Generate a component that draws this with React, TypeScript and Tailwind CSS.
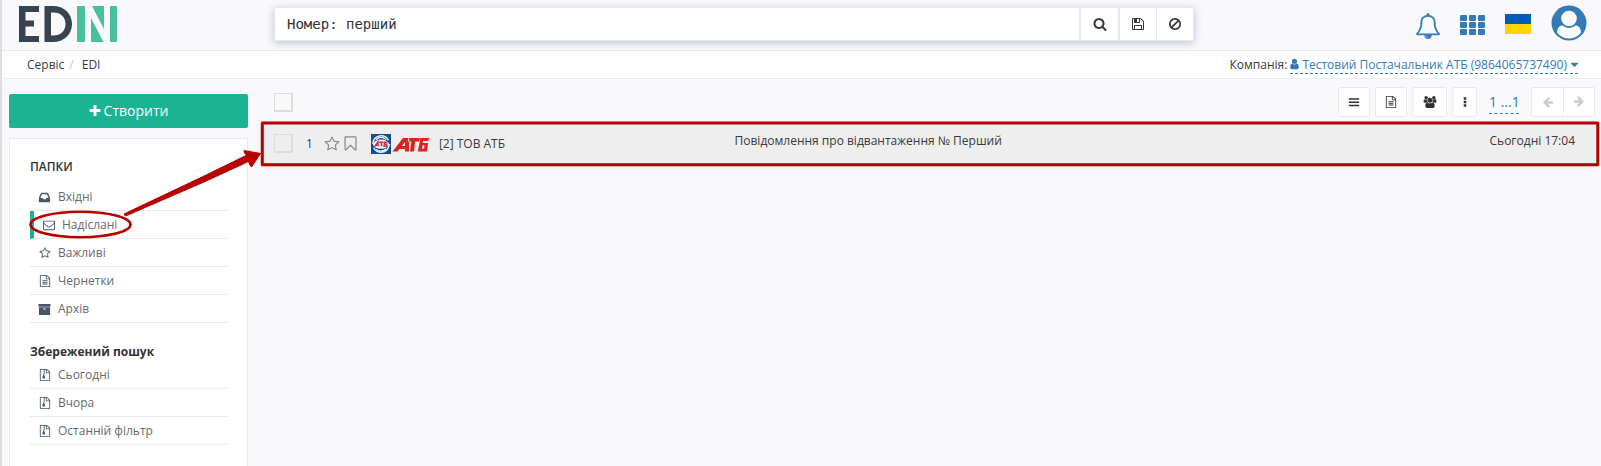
import React from "react";

const paths = {
  plus: "M1600 736v192q0 40-28 68t-68 28h-416v416q0 40-28 68t-68 28h-192q-40 0-68-28t-28-68v-416h-416q-40 0-68-28t-28-68v-192q0-40 28-68t68-28h416v-416q0-40 28-68t68-28h192q40 0 68 28t28 68v416h416q40 0 68 28t28 68z",
  search: "M1216 832q0-185-131.5-316.5t-316.5-131.5-316.5 131.5-131.5 316.5 131.5 316.5 316.5 131.5 316.5-131.5 131.5-316.5zm512 832q0 52-38 90t-90 38q-54 0-90-38l-343-342q-179 124-399 124-143 0-273.5-55.5t-225-150-150-225-55.5-273.5 55.5-273.5 150-225 225-150 273.5-55.5 273.5 55.5 225 150 150 225 55.5 273.5q0 220-124 399l343 343q37 37 37 90z",
  save: "M512 1536h768v-384h-768v384zm896 0h128v-896q0-14-10-38.5t-20-34.5l-281-281q-10-10-34-20t-39-10v416q0 40-28 68t-68 28h-576q-40 0-68-28t-28-68v-416h-128v1280h128v-416q0-40 28-68t68-28h832q40 0 68 28t28 68v416zm-384-928v-320q0-13-9.5-22.5t-22.5-9.5h-192q-13 0-22.5 9.5t-9.5 22.5v320q0 13 9.5 22.5t22.5 9.5h192q13 0 22.5-9.5t9.5-22.5zm640 32v928q0 40-28 68t-68 28h-1344q-40 0-68-28t-28-68v-1344q0-40 28-68t68-28h928q40 0 88 20t76 48l280 280q28 28 48 76t20 88z",
  ban: "M1440 893q0-161-87-295l-754 753q137 89 297 89 111 0 211.5-43.5t173.5-116.5 116-174.5 43-212.5zm-999 299l755-754q-135-91-300-91-148 0-273 73t-198 199-73 274q0 162 89 299zm1223-299q0 157-61 300t-163.5 246-245 164-298.5 61-298.5-61-245-164-163.5-246-61-300 61-299.5 163.5-245.5 245-164 298.5-61 298.5 61 245 164 163.5 245.5 61 299.5z",
  inbox: "M1151 960h316q-1-3-2.5-8t-2.5-8l-212-496h-708l-212 496q-1 2-2.5 8t-2.5 8h316l95 192h320zm513 30v482q0 26-19 45t-45 19h-1408q-26 0-45-19t-19-45v-482q0-62 25-123l238-552q10-25 36.5-42t52.5-17h832q26 0 52.5 17t36.5 42l238 552q25 61 25 123z",
  envelope: "M1664 1504v-768q-32 36-69 66-268 206-426 338-51 43-83 67t-86.5 48.5-102.5 24.5h-2q-48 0-102.5-24.5t-86.5-48.5-83-67q-158-132-426-338-37-30-69-66v768q0 13 9.5 22.5t22.5 9.5h1472q13 0 22.5-9.5t9.5-22.5zm0-1051v-24.5l-.5-13-3-12.5-5.5-9-9-7.5-14-2.5h-1472q-13 0-22.5 9.5t-9.5 22.5q0 168 147 284 193 152 401 317 6 5 35 29.5t46 37.5 44.5 31.5 50.5 27.5 43 9h2q20 0 43-9t50.5-27.5 44.5-31.5 46-37.5 35-29.5q208-165 401-317 54-43 100.5-115.5t46.5-131.5zm128-37v1088q0 66-47 113t-113 47h-1472q-66 0-113-47t-47-113v-1088q0-66 47-113t113-47h1472q66 0 113 47t47 113z",
  star: "M1201 1004l306-297-422-62-189-382-189 382-422 62 306 297-73 421 378-199 377 199zm527-357q0 22-26 48l-363 354 86 500q1 7 1 20 0 50-41 50-19 0-40-12l-449-236-449 236q-22 12-40 12-21 0-31.5-14.5t-10.5-35.5q0-6 2-20l86-500-364-354q-25-27-25-48 0-37 56-46l502-73 225-455q19-41 49-41t49 41l225 455 502 73q56 9 56 46z",
  fileText: "M1596 380q28 28 48 76t20 88v1152q0 40-28 68t-68 28h-1344q-40 0-68-28t-28-68v-1600q0-40 28-68t68-28h896q40 0 88 20t76 48zm-444-244v376h376q-10-29-22-41l-313-313q-12-12-41-22zm384 1528v-1024h-416q-40 0-68-28t-28-68v-416h-768v1536h1280zm-1024-864q0-14 9-23t23-9h704q14 0 23 9t9 23v64q0 14-9 23t-23 9h-704q-14 0-23-9t-9-23v-64zm736 224q14 0 23 9t9 23v64q0 14-9 23t-23 9h-704q-14 0-23-9t-9-23v-64q0-14 9-23t23-9h704zm0 256q14 0 23 9t9 23v64q0 14-9 23t-23 9h-704q-14 0-23-9t-9-23v-64q0-14 9-23t23-9h704z",
  fileZip: "M1596 380q28 28 48 76t20 88v1152q0 40-28 68t-68 28h-1344q-40 0-68-28t-28-68v-1600q0-40 28-68t68-28h896q40 0 88 20t76 48zm-444-244v376h376q-10-29-22-41l-313-313q-12-12-41-22zm384 1528v-1024h-416q-40 0-68-28t-28-68v-416h-128v128h-128v-128h-512v1536h1280zM640 256v128h128v-128zM768 384v128h128v-128zM640 512v128h128v-128zM768 640v128h128v-128zM640 768v128h-20l-107 349q-21 71 35 121t156 50 156-50 35-121l-107-349h-20v-128z",
  archive: "M1088 832q0-26-19-45t-45-19h-256q-26 0-45 19t-19 45 19 45 45 19h256q26 0 45-19t19-45zm576-192v960q0 26-19 45t-45 19h-1408q-26 0-45-19t-19-45v-960q0-26 19-45t45-19h1408q26 0 45 19t19 45zm64-448v256q0 26-19 45t-45 19h-1536q-26 0-45-19t-19-45v-256q0-26 19-45t45-19h1536q26 0 45 19t19 45z",
  bookmark: "M1408 256h-1024v1242l423-406 89-85 89 85 423 406v-1242zm12-128q23 0 44 9 33 13 52.5 41t19.5 62v1289q0 34-19.5 62t-52.5 41q-19 8-44 8-48 0-83-32l-441-424-441 424q-36 33-83 33-23 0-44-9-33-13-52.5-41t-19.5-62v-1289q0-34 19.5-62t52.5-41q21-9 44-9h1048z",
  user: "M1536 1399q0 109-62.5 187t-150.5 78h-854q-88 0-150.5-78t-62.5-187q0-85 8.5-160.5t31.5-152 58.5-131 94-89 134.5-34.5q131 128 313 128t313-128q76 0 134.5 34.5t94 89 58.5 131 31.5 152 8.5 160.5zm-256-887q0 159-112.5 271.5t-271.5 112.5-271.5-112.5-112.5-271.5 112.5-271.5 271.5-112.5 271.5 112.5 112.5 271.5z",
  users: "M529 896q-162 5-265 128h-134q-82 0-138-40.5t-56-118.5q0-353 124-353 6 0 43.5 21t97.5 42.5 119 21.5q67 0 133-23-5 37-5 66 0 159 90 293zm1071 637q0 120-73 189.5t-194 69.5h-874q-121 0-194-69.5t-73-189.5q0-53 3.5-103.5t14-109 26.5-108.5 43-97.5 62-81 85.5-53.5 111.5-20q10 0 43 21.5t73 48 107 48 135 21.5 135-21.5 107-48 73-48 43-21.5q61 0 111.5 20t85.5 53.5 62 81 43 97.5 26.5 108.5 14 109 3.5 103.5zm-1024-1277q0 106-75 181t-181 75-181-75-75-181 75-181 181-75 181 75 75 181zm704 384q0 159-112.5 271.5t-271.5 112.5-271.5-112.5-112.5-271.5 112.5-271.5 271.5-112.5 271.5 112.5 112.5 271.5zm576 225q0 78-56 118.5t-138 40.5h-134q-103-123-265-128 90-134 90-293 0-29-5-66 66 23 133 23 59 0 119-21.5t97.5-42.5 43.5-21q124 0 124 353zm-128-609q0 106-75 181t-181 75-181-75-75-181 75-181 181-75 181 75 75 181z",
  caret: "M1408 704q0 26-19 45l-448 448q-19 19-45 19t-45-19l-448-448q-19-19-19-45t19-45 45-19h896q26 0 45 19t19 45z",
  arrow: "M1664 896v128q0 53-32.5 90.5t-84.5 37.5h-704l293 294q38 36 38 90t-38 90l-75 76q-37 37-90 37-52 0-91-37l-651-652q-37-37-37-90 0-52 37-91l651-650q38-38 91-38 52 0 90 38l75 74q38 38 38 91t-38 91l-293 293h704q52 0 84.5 37.5t32.5 90.5z",
  bell: "M912 1696q0-16-16-16-59 0-101.5-42.5t-42.5-101.5q0-16-16-16t-16 16q0 73 51.5 124.5t124.5 51.5q16 0 16-16zm-666-288h1300q-266-300-266-832 0-51-24-105t-69-103-121.5-80.5-169.5-31.5-169.5 31.5-121.5 80.5-69 103-24 105q0 532-266 832zm1482 0q0 52-38 90t-90 38h-448q0 106-75 181t-181 75-181-75-75-181h-448q-52 0-90-38t-38-90q50-42 91-88t85-119.5 74.5-158.5 50-206 19.5-260q0-152 117-282.5t307-158.5q-8-19-8-39 0-40 28-68t68-28 68 28 28 68q0 20-8 39 190 28 307 158.5t117 282.5q0 139 19.5 260t50 206 74.5 158.5 85 119.5 91 88z",
  bars: "M128 352h1536v224H128zM128 832h1536v224H128zM128 1312h1536v224H128z",
  dots: "M704 192h384v384h-384zM704 704h384v384h-384zM704 1216h384v384h-384z",
};

type IconName = keyof typeof paths;

function Icon({ name, className }: { name: IconName; className: string }) {
  return (
    <svg viewBox="0 0 1792 1792" fill="currentColor" className={`shrink-0 overflow-visible ${className}`}>
      <path d={paths[name]} />
    </svg>
  );
}

function Logo() {
  return (
    <svg width="99" height="36" viewBox="0 0 99 36" className="mt-[6px] ml-[17px]">
      <path fill="#39434f" d="M0 0h20v6H6.500v8.500h8.500v6H6.500V30H20v6H0zM25.500 0H34c11 0 19 7.500 19 18s-8 18-19 18h-8.500zM32 6.500v23h2.500c7 0 12-4.500 12-11.500s-5-11.500-12-11.500z" />
      <path fill="#48c09a" d="M58 0h8v36h-8zM72 12l12.500 24H72zM73 0h12v23zM91 0h7v36h-7z" />
    </svg>
  );
}

function AtbLogo() {
  return (
    <svg width="59" height="20" viewBox="0 0 59 20">
      <path fill="#134c93" d="M0 0h20v20H0z" />
      <circle cx="10" cy="10" r="8.300" fill="none" stroke="#e9eef5" strokeWidth="1.500" strokeDasharray="22 4" />
      <ellipse cx="10" cy="10.200" rx="8" ry="4.600" fill="#f4f4f6" />
      <path stroke="#fff" strokeWidth="1.200" fill="none" d="M5 5.500c3-2.500 7-2.500 10 0M5 15.500c3 2 7 2 10-.5" />
      <path stroke="#d8303a" strokeWidth="1.500" fill="none" d="M3.500 12.500l3.500-4.500v4.500M4.500 11.300h2.500M8 8.200h4.500M10.500 8v4.500M16.500 8.200h-3l-.5 4h2.800v-2h-2.500" />
      <path fill="#d9241f" fillRule="evenodd" d="M21.500 17.500L32 4h6v13.500h-4V15h-5.500l-2 2.500zM31 12h3V8zM37.500 4H49l-.8 3.500h-4L43 17.500h-4l1.200-10h-3.500zM49.500 4H58.500l-1.500 3H52l-.4 2h5.400l-.9 8.500H46.800zM51.500 11.500l-.4 3.200h2l.4-3.200z" />
    </svg>
  );
}

function NavItem({ icon, label, active }: { icon: IconName; label: string; active?: boolean }) {
  return (
    <li
      className={`flex h-7 items-center gap-[7px] border-b border-[#e7eaec] pt-px pl-2 text-[#676a6c] ${
        active ? "border-l-4 border-l-[#1ab394]" : ""
      }`}
    >
      <span className="flex w-[13px] justify-center text-[#46556a]">
        <Icon name={icon} className={icon === "inbox" || icon === "archive" ? "size-[13px]" : "size-[12px]"} />
      </span>
      <span>{label}</span>
    </li>
  );
}

const folders: { icon: IconName; label: string; active?: boolean }[] = [
  { icon: "inbox", label: "Вхідні" },
  { icon: "envelope", label: "Надіслані", active: true },
  { icon: "star", label: "Важливі" },
  { icon: "fileText", label: "Чернетки" },
  { icon: "archive", label: "Архів" },
];

const saved = ["Сьогодні", "Вчора", "Останній фільтр"];

function Checkbox() {
  return <span className="size-[19px] shrink-0 border border-r-2 border-b-2 border-[#dfddda]" />;
}

const toolButton = "flex h-[30px] items-center justify-center rounded-[2px] border border-[#e7eaec] bg-white";

export default function App() {
  return (
    <div className="relative flex h-[466px] w-[1601px] flex-col overflow-hidden border-l-2 border-[#dcdcde] bg-[#f9f9fb] font-['Open_Sans','Noto_Sans',sans-serif] text-[12px] leading-[18px] text-[#3a3a3d]">
      <header className="flex h-[51px] shrink-0 border-b border-[#e7eaec]">
        <Logo />
        <div className="mt-[7px] ml-[156px] flex h-[34px] w-[920px] border border-[#e7eaec] bg-white shadow-[0_2px_8px_rgba(60,70,110,0.3)]">
          <div className="flex flex-1 items-center pl-3 font-['DejaVu_Sans_Mono',monospace] text-[14px] text-[#333]">
            Номер: перший
          </div>
          <button className="flex w-[39px] items-center justify-center border-l-2 border-[#e7eaec]">
            <Icon name="search" className="size-[14px]" />
          </button>
          <button className="flex w-[38px] items-center justify-center border-l-2 border-[#e7eaec]">
            <Icon name="save" className="size-[14px]" />
          </button>
          <button className="flex w-[37px] items-center justify-center border-l border-[#e7eaec]">
            <Icon name="ban" className="size-[14px]" />
          </button>
        </div>
        <div className="ml-auto flex items-start pr-[14px] text-[#337ab7]">
          <Icon name="bell" className="mt-[13px] size-[26px]" />
          <div className="mt-[15px] ml-[19px] grid grid-cols-3 gap-x-[2px] gap-y-[1px]">
            {Array.from({ length: 9 }, (_, i) => (
              <span key={i} className="h-[6px] w-[7px] rounded-[1px] bg-[#337ab7]" />
            ))}
          </div>
          <div className="mt-[14px] ml-[20px] flex h-[20px] w-[26px] flex-col">
            <span className="flex-1 bg-[#005bbb]" />
            <span className="flex-1 bg-[#ffd500]" />
          </div>
          <svg width="36" height="36" viewBox="0 0 36 36" className="mt-[5px] ml-[20px]">
            <circle cx="18" cy="18" r="17.500" fill="#337ab7" />
            <circle cx="18" cy="13.500" r="7.800" fill="#f9f9fb" />
            <path fill="#f9f9fb" d="M6 27.500c.3-4.500 2.500-7 5.500-7 4 3.200 9 3.200 13 0 3 0 5.200 2.500 5.500 7-6 8-18 8-24 0z" />
          </svg>
        </div>
      </header>

      <nav className="flex h-7 shrink-0 items-start border-b border-[#e7eaec] bg-white pt-[5px] pr-[23px] pl-[25px]">
        <span>Сервіс</span>
        <span className="ml-[5px] text-[#ccc]">/</span>
        <span className="ml-[8px]">EDI</span>
        <div className="ml-auto flex items-start gap-[3px]">
          <span>Компанія:</span>
          <span className="flex h-[18px] items-center border-b border-dashed border-[#337ab7] text-[#337ab7]">
            <Icon name="user" className="-ml-[2px] size-[13px] pb-px" />
            <span className="ml-px leading-[18px] whitespace-nowrap">Тестовий Постачальник АТБ (9864065737490)</span>
            <Icon name="caret" className="-mr-[3px] ml-px size-[13px]" />
          </span>
        </div>
      </nav>

      <div className="flex min-h-0 flex-1">
        <aside className="ml-[7px] flex w-[239px] flex-col pt-[15px]">
          <button className="flex h-[34px] shrink-0 items-center justify-center gap-[2px] rounded-[2px] bg-[#1ab394] pr-px text-[14px] text-white">
            <Icon name="plus" className="size-[14px]" />
            Створити
          </button>
          <div className="mt-[10px] flex-1 border border-b-0 border-[#e7eaf2] bg-white px-5 pt-[19px]">
            <h2 className="font-semibold text-[#333]">ПАПКИ</h2>
            <ul className="mt-[7px]">
              {folders.map((item) => (
                <NavItem key={item.label} {...item} />
              ))}
            </ul>
            <h2 className="mt-[20px] font-bold text-[#333]">Збережений пошук</h2>
            <ul>
              {saved.map((label) => (
                <NavItem key={label} icon="fileZip" label={label} />
              ))}
            </ul>
          </div>
        </aside>

        <main className="ml-[15px] flex-1">
          <div className="flex h-[45px] items-start pt-[8px] pr-[6px] pl-[11px]">
            <div className="mt-[6px] flex">
              <Checkbox />
            </div>
            <div className="ml-auto flex items-start text-[#333]">
              <button className={`${toolButton} w-[32px]`}>
                <Icon name="bars" className="size-[12px]" />
              </button>
              <button className={`${toolButton} ml-[5px] w-[32px]`}>
                <Icon name="fileText" className="size-[12px]" />
              </button>
              <button className={`${toolButton} ml-[5px] w-[35px]`}>
                <Icon name="users" className="size-[12px]" />
              </button>
              <button className={`${toolButton} ml-[5px] w-[25px]`}>
                <Icon name="dots" className="size-[12px]" />
              </button>
              <span className="mt-[6px] ml-[12px] h-[21px] w-[30px] border-b border-dashed border-[#337ab7] text-[14px] leading-[18px] whitespace-nowrap text-[#337ab7]">
                1 ...1
              </span>
              <div className="ml-[12px] flex text-[#ccc]">
                <button className={`${toolButton} w-[33px]`}>
                  <Icon name="arrow" className="size-[12px]" />
                </button>
                <button className={`${toolButton} -ml-px w-[32px]`}>
                  <Icon name="arrow" className="size-[12px] rotate-180" />
                </button>
              </div>
            </div>
          </div>
          <div className="mr-[4px] flex h-[39px] bg-[#eee] pr-[22px] pl-[11px] shadow-[0_2px_6px_rgba(60,70,110,0.25)]">
            <div className="flex w-[460.500px] items-center">
              <Checkbox />
              <span className="ml-[13px]">1</span>
              <Icon name="star" className="ml-[11px] size-[16px] text-[#888]" />
              <Icon name="bookmark" className="ml-[2px] size-[17px] text-[#888]" />
              <span className="ml-[12px]">
                <AtbLogo />
              </span>
              <span className="ml-[9px]">[2] ТОВ АТБ</span>
            </div>
            <span className="mt-[8px]">Повідомлення про відвантаження № Перший</span>
            <span className="mt-[8px] ml-auto">Сьогодні 17:04</span>
          </div>
        </main>
      </div>

      <svg width="1601" height="466" viewBox="0 0 1601 466" className="pointer-events-none absolute top-0 -left-0.5">
        <rect x="262.300" y="123" width="1335.500" height="41.700" fill="none" stroke="#b80000" strokeWidth="3" strokeLinejoin="round" />
        <ellipse cx="80.500" cy="224.500" rx="50" ry="12.800" fill="none" stroke="#b80000" strokeWidth="2.600" />
        <path
          fill="#b80000"
          stroke="#b80000"
          strokeLinejoin="round"
          d="M124 214L203 176.500L246.500 155.300Q243.500 152.500 244 150.500L260.500 153.500L251.500 167Q249.500 165 248.500 161.500L204 182L125.500 216z"
        />
      </svg>
    </div>
  );
}
